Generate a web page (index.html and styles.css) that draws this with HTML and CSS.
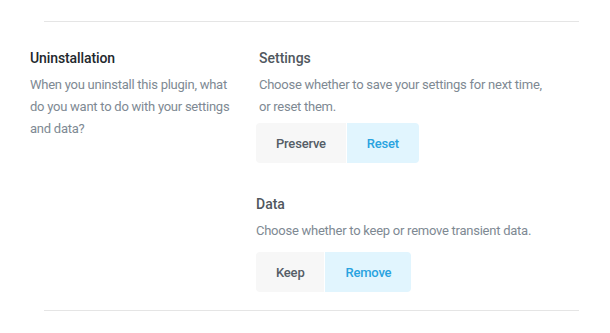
FILE: index.html
```html
<!DOCTYPE html>
<html lang="en">
<head>
    <meta charset="UTF-8">
    <meta name="viewport" content="width=device-width, initial-scale=1.0">
    <title>Uninstallation</title>
    <link rel="stylesheet" href="styles.css">
</head>
<body>
    <div class="panel">
        <hr class="rule">
        <div class="row">
            <div class="label-col">
                <h3 class="row-title">Uninstallation</h3>
                <p class="row-desc">When you uninstall this plugin, what do you want to do with your settings and data?</p>
            </div>
            <div class="fields">
                <div class="field field-settings">
                    <h4 class="field-title">Settings</h4>
                    <p class="field-desc">Choose whether to save your settings for next time, or reset them.</p>
                    <div class="toggle">
                        <button class="toggle-btn">Preserve</button>
                        <button class="toggle-btn active">Reset</button>
                    </div>
                </div>
                <div class="field field-data">
                    <h4 class="field-title">Data</h4>
                    <p class="field-desc">Choose whether to keep or remove transient data.</p>
                    <div class="toggle">
                        <button class="toggle-btn">Keep</button>
                        <button class="toggle-btn active">Remove</button>
                    </div>
                </div>
            </div>
        </div>
        <hr class="rule">
    </div>
</body>
</html>
```

FILE: styles.css
```css
body {
    margin: 0;
    padding: 0;
    background-color: #fff;
    font-family: Roboto, "Liberation Sans", sans-serif;
}
.panel {
    padding-top: 21px;
}
.rule {
    border: none;
    border-top: 1px solid #e5e5e5;
    margin: 0 31px 0 44px;
    height: 0;
}
.row {
    display: flex;
    gap: 20px;
    padding: 26px 0 18px 30px;
}
.label-col {
    width: 206px;
    flex-shrink: 0;
}
.row-title {
    margin: 0;
    font-size: 14px;
    line-height: 20px;
    font-weight: 500;
    color: #23282d;
    letter-spacing: -0.1px;
}
.row-desc {
    margin: 6px 0 0;
    font-size: 13px;
    line-height: 22px;
    color: #7e8993;
    letter-spacing: -0.25px;
}
.fields {
    width: 300px;
}
.field-settings .field-title,
.field-settings .field-desc {
    padding-left: 3px;
}
.field-data {
    margin-top: 31px;
}
.field-title {
    margin: 0;
    font-size: 14px;
    line-height: 20px;
    font-weight: 500;
    color: #50575e;
}
.field-desc {
    margin: 6px 0 5px;
    font-size: 13px;
    line-height: 22px;
    color: #7e8993;
    letter-spacing: -0.25px;
}
.field-data .field-desc {
    margin-bottom: 10px;
}
.toggle {
    display: inline-flex;
    gap: 1px;
    border-radius: 4px;
    overflow: hidden;
}
.toggle-btn {
    border: none;
    padding: 0 20px;
    height: 40px;
    font-family: inherit;
    font-size: 13px;
    font-weight: 500;
    letter-spacing: -0.2px;
    color: #555d66;
    background-color: #f7f7f7;
    cursor: pointer;
}
.toggle-btn.active {
    color: #29a3e0;
    background-color: #e1f5fe;
}
```
